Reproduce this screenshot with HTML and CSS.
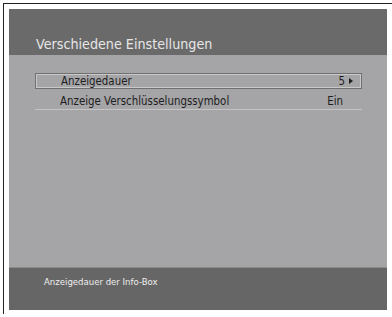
FILE: index.html
```html
<!DOCTYPE html>
<html lang="de">
<head>
  <meta charset="UTF-8">
  <title>Verschiedene Einstellungen</title>
  <link rel="stylesheet" href="styles.css">
</head>
<body>
  <div class="frame">
    <div class="screen">
      <div class="header">
        <h1>Verschiedene Einstellungen</h1>
      </div>
      <div class="content">
        <div class="row selected">
          <span class="label">Anzeigedauer</span>
          <span class="value">5<span class="arrow"></span></span>
        </div>
        <div class="row">
          <span class="label">Anzeige Verschlüsselungssymbol</span>
          <span class="value">Ein</span>
        </div>
      </div>
      <div class="footer">Anzeigedauer der Info-Box</div>
    </div>
  </div>
</body>
</html>
```

FILE: styles.css
```css
body {
  margin: 0;
  background: #fff;
  font-family: "DejaVu Sans Condensed", "DejaVu Sans", sans-serif;
  font-stretch: condensed;
}
.frame {
  margin: 3px 0 0 3px;
  border-top: 1px solid #222;
  border-left: 1px solid #222;
  padding: 5px 0 0 5px;
  width: 384px;
  height: 305px;
}
.screen {
  width: 378px;
  height: 301px;
  display: flex;
  flex-direction: column;
  background: #a5a5a7;
}
.header {
  height: 46px;
  background: #6a6a6a;
  display: flex;
  align-items: flex-end;
  padding-left: 27px;
}
.header h1 {
  margin: 0 0 3px;
  font-weight: normal;
  font-size: 14.2px;
  color: #e6e6e6;
}
.content {
  flex: 1;
  padding: 18px 25px 0 26px;
}
.row {
  height: 17px;
  display: flex;
  align-items: center;
  justify-content: space-between;
  padding: 0 19px 0 25px;
  font-size: 11.4px;
  color: #1e1e1e;
  border-bottom: 1px solid #c4c4c4;
  margin-top: 3px;
}
.row.selected {
  height: 14px;
  margin-top: 0;
  border: 1px solid #707070;
  box-shadow: inset 1px 1px 0 #c8c8c8, inset -1px -1px 0 #c8c8c8;
  padding-right: 8px;
}
.value {
  display: flex;
  align-items: center;
}
.arrow {
  margin-left: 4px;
  width: 0;
  height: 0;
  border-top: 3.5px solid transparent;
  border-bottom: 3.5px solid transparent;
  border-left: 4px solid #1e1e1e;
}
.footer {
  height: 43px;
  background: #666;
  border-top: 1px solid #8a8a8a;
  color: #eee;
  font-size: 9.5px;
  padding: 8px 0 0 35px;
  box-sizing: border-box;
}
```
